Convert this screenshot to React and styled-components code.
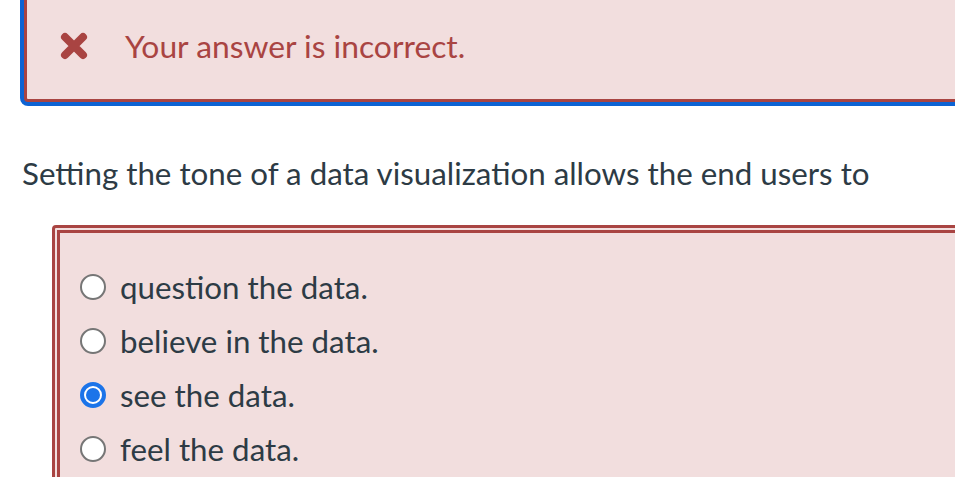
import styled, { createGlobalStyle } from "styled-components";

const GlobalStyle = createGlobalStyle`
  html, body {
    margin: 0;
    padding: 0;
    background: #fff;
    overflow: hidden;
  }
  body {
    font-family: Lato, "Open Sans", sans-serif;
    color: #2d3b45;
  }
`;

const Page = styled.div`
  width: 955px;
  height: 491px;
  overflow: hidden;
  margin-top: -14px;
`;

const Alert = styled.div`
  margin-left: 24px;
  border: 3px solid #a94442;
  border-radius: 4px;
  box-shadow: 0 0 0 4px #0d63d3;
  background: #f2dede;
  padding: 37px 0 33px 33px;
  display: flex;
  align-items: center;
  gap: 37px;
  width: 1000px;
`;

const AlertText = styled.span`
  font-size: 31.8px;
  line-height: 40px;
  color: #a94442;
`;

const Question = styled.p`
  margin: 51px 0 0 22px;
  font-size: 31.3px;
  line-height: 40px;
`;

const Answers = styled.div`
  margin: 32px 0 0 52px;
  border: 8px double #a94442;
  border-radius: 4px;
  background: #f2dede;
  padding: 27px 0 40px 20px;
  width: 1000px;
`;

const Option = styled.label`
  display: flex;
  align-items: center;
  gap: 14px;
  height: 54px;
  font-size: 31.3px;
`;

const Radio = styled.span`
  box-sizing: border-box;
  width: 26px;
  height: 26px;
  border-radius: 50%;
  background: #fff;
  border: ${(p) => (p.checked ? "4px solid #1c74e9" : "2px solid #767676")};
  display: flex;
  align-items: center;
  justify-content: center;
  &::after {
    content: "";
    display: ${(p) => (p.checked ? "block" : "none")};
    width: 14px;
    height: 14px;
    border-radius: 50%;
    background: #1c74e9;
  }
`;

const XIcon = () => (
  <svg width="28" height="28" viewBox="0 0 28 28">
    <path
      d="M5 5 L23 23 M23 5 L5 23"
      stroke="#a94442"
      strokeWidth="8"
      strokeLinecap="round"
    />
  </svg>
);

const options = [
  "question the data.",
  "believe in the data.",
  "see the data.",
  "feel the data.",
];

export default function App() {
  return (
    <>
      <GlobalStyle />
      <Page>
        <Alert>
          <XIcon />
          <AlertText>Your answer is incorrect.</AlertText>
        </Alert>
        <Question>
          Setting the tone of a data visualization allows the end users to
        </Question>
        <Answers>
          {options.map((o, i) => (
            <Option key={o}>
              <Radio checked={i === 2} />
              {o}
            </Option>
          ))}
        </Answers>
      </Page>
    </>
  );
}
